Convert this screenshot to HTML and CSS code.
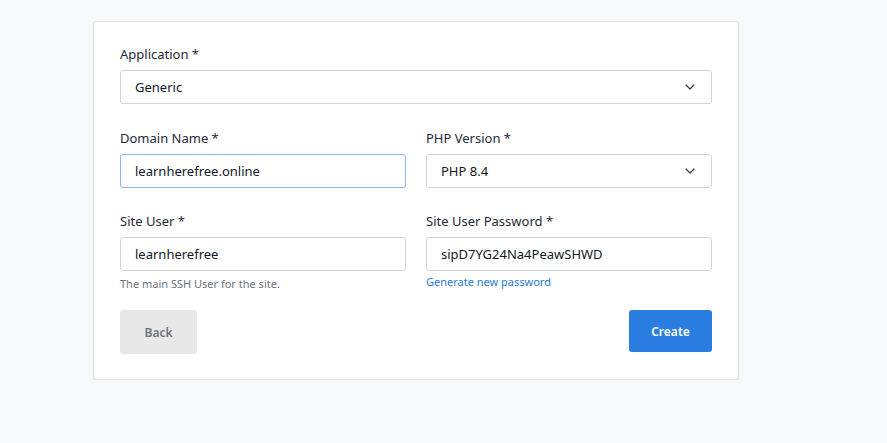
FILE: index.html
```html
<!DOCTYPE html>
<html>
<head>
<meta charset="utf-8">
<link rel="stylesheet" href="styles.css">
</head>
<body>
<div class="page">
  <form class="card">
    <div class="field full">
      <label class="label">Application *</label>
      <div class="control select">
        <span>Generic</span>
        <svg class="chev" width="10" height="6" viewBox="0 0 10 6"><path d="M1 1l4 4 4-4" fill="none" stroke="#374151" stroke-width="1.3" stroke-linecap="round" stroke-linejoin="round"/></svg>
      </div>
    </div>
    <div class="row row-a">
      <div class="field">
        <label class="label">Domain Name *</label>
        <div class="control focus"><span>learnherefree.online</span></div>
      </div>
      <div class="field">
        <label class="label">PHP Version *</label>
        <div class="control select">
          <span>PHP 8.4</span>
          <svg class="chev" width="10" height="6" viewBox="0 0 10 6"><path d="M1 1l4 4 4-4" fill="none" stroke="#374151" stroke-width="1.3" stroke-linecap="round" stroke-linejoin="round"/></svg>
        </div>
      </div>
    </div>
    <div class="row row-b">
      <div class="field">
        <label class="label">Site User *</label>
        <div class="control"><span>learnherefree</span></div>
        <div class="help">The main SSH User for the site.</div>
      </div>
      <div class="field">
        <label class="label">Site User Password *</label>
        <div class="control"><span>sipD7YG24Na4PeawSHWD</span></div>
        <a class="link">Generate new password</a>
      </div>
    </div>
    <div class="actions">
      <button type="button" class="btn back">Back</button>
      <button type="button" class="btn create">Create</button>
    </div>
  </form>
</div>
</body>
</html>
```

FILE: styles.css
```css
html, body {
  margin: 0;
  padding: 0;
  background: #f8f9fb;
  font-family: "Noto Sans", "Open Sans", sans-serif;
  color: #1f2937;
}
.page {
  padding: 21px 0 0 93px;
}
.card {
  box-sizing: border-box;
  width: 646px;
  height: 359px;
  background: #fff;
  border: 1px solid #e3e5e8;
  border-radius: 3px;
  box-shadow: 0 1px 2px rgba(0,0,0,0.07);
  padding: 23px 26px 0 26px;
  display: flex;
  flex-direction: column;
}
.row {
  display: grid;
  grid-template-columns: 286px 286px;
  column-gap: 20px;
}
.row-a {
  margin-top: 25px;
}
.row-b {
  margin-top: 24px;
}
.field {
  display: flex;
  flex-direction: column;
}
.label {
  font-size: 13px;
  line-height: 18px;
  color: #1f2937;
  margin-bottom: 7px;
}
.control {
  box-sizing: border-box;
  height: 34px;
  border: 1px solid #d1d5db;
  border-radius: 3px;
  display: flex;
  align-items: center;
  justify-content: space-between;
  padding: 0 14px 0 14px;
  font-size: 13px;
  color: #111827;
}
.control.focus {
  border-color: #8ab4f3;
}
.chev {
  margin-right: 2px;
}
.help {
  font-size: 11px;
  line-height: 16px;
  color: #6b7280;
  margin-top: 5px;
}
.link {
  font-size: 11px;
  line-height: 16px;
  color: #1f7ad6;
  margin-top: 3px;
}
.actions {
  display: flex;
  justify-content: space-between;
  align-items: flex-start;
  margin-top: 18px;
}
.btn {
  border: none;
  border-radius: 3px;
  font-family: inherit;
  font-size: 12px;
  font-weight: 600;
  padding: 0;
}
.back {
  width: 77px;
  height: 44px;
  background: #e8e8e8;
  color: #6b7280;
}
.create {
  width: 83px;
  height: 42px;
  background: #2a7de1;
  color: #fff;
}
```
